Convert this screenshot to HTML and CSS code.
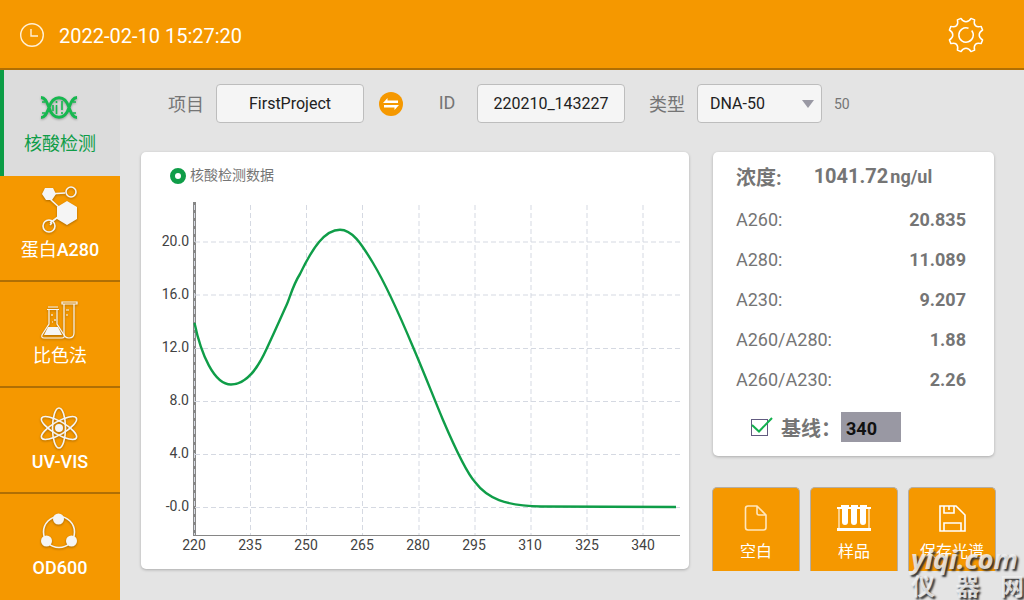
FILE: index.html
```html
<!DOCTYPE html>
<html lang="zh-CN">
<head>
    <meta charset="UTF-8">
    <meta name="viewport" content="width=device-width, initial-scale=1.0">
    <title>核酸检测</title>
    <link rel="stylesheet" href="styles.css">
</head>
<body>
    <header class="topbar">
        <svg class="clock-icon" width="24" height="24" viewBox="0 0 24 24">
            <circle cx="12" cy="12" r="11.3"/>
            <path d="M11 6v7h7"/>
        </svg>
        <time class="datetime">2022-02-10 15:27:20</time>
        <button class="settings-button" aria-label="设置">
            <svg width="36" height="36" viewBox="0 0 36 36">
                <path d="M13 1.4 Q15 4.8 18 4.8 Q21 4.8 23 1.4 L26.6 2.9 Q25.6 6.6 27.4 8.6 Q29.4 10.4 33.1 9.4 L34.6 13 Q31.2 15 31.2 18 Q31.2 21 34.6 23 L33.1 26.6 Q29.4 25.6 27.4 27.4 Q25.6 29.4 26.6 33.1 L23 34.6 Q21 31.2 18 31.2 Q15 31.2 13 34.6 L9.4 33.1 Q10.4 29.4 8.6 27.4 Q6.6 25.6 2.9 26.6 L1.4 23 Q4.8 21 4.8 18 Q4.8 15 1.4 13 L2.9 9.4 Q6.600 10.4 8.6 8.6 Q10.4 6.6 9.4 2.9 Z"/>
                <path d="M20.5 11.2a7.2 7.2 0 1 0 3.2 2.3"/>
            </svg>
        </button>
    </header>

    <div class="layout">
        <nav class="sidebar">
            <a href="#" class="nav-item active">
                <svg width="38" height="26" viewBox="0 0 38 26">
                    <path class="strand" d="M1 2.500C6 2.500 7 8 9 12.500C13 25.500 25 25.500 29 12.500C31 8 32 2.500 37 2.500M1 22.500C6 22.500 7 17 9 12.500C13-.5 25-.5 29 12.500C31 17 32 22.500 37 22.500"/>
                    <path d="M16.500 6v2M16.500 10v9M22 6v9M22 17v2M13 10v6M2 7h3M2 18h3M33 7h3M33 18h3"/>
                </svg>
                <span>核酸检测</span>
            </a>
            <a href="#" class="nav-item">
                <svg width="38" height="48" viewBox="0 0 38 48">
                    <path d="M8 8 25 7M10 13 22 24M10 37 22 28"/>
                    <path class="solid" d="M5 2h8l3 6-4 6H6L2 8ZM27 15l10 6v12l-10 6-10-6V21Z"/>
                    <circle cx="31" cy="6" r="5"/>
                    <circle cx="9" cy="40" r="6"/>
                    <path d="M10 39l2-2"/>
                </svg>
                <span>蛋白<b>A280</b></span>
            </a>
            <a href="#" class="nav-item">
                <svg class="thin" width="38" height="40" viewBox="0 0 38 40">
                    <path d="M8 7h10M7 9.500h12M9 10v14L2 35q-1 3 2 3h18q3 0 2-3L17 24V10"/>
                    <path class="solid" d="M8 27h10l4 8H4Z"/>
                    <path d="M12 14v2M15 19v2M12 22h1M22 2h15v2H22ZM24 4v29q0 5 5 5t5-5V4M26 10h3M26 15h2"/>
                </svg>
                <span>比色法</span>
            </a>
            <a href="#" class="nav-item">
                <svg class="atom" width="40" height="42" viewBox="0 0 40 42">
                    <ellipse cx="20" cy="21" rx="6.500" ry="20"/>
                    <ellipse cx="20" cy="21" rx="6.500" ry="20" transform="rotate(60 20 21)"/>
                    <ellipse cx="20" cy="21" rx="6.500" ry="20" transform="rotate(-60 20 21)"/>
                    <circle class="solid" cx="20" cy="21" r="4"/>
                </svg>
                <b>UV-VIS</b>
            </a>
            <a href="#" class="nav-item">
                <svg width="38" height="40" viewBox="0 0 38 40">
                    <circle cx="19" cy="20" r="15.500"/>
                    <circle class="solid" cx="18.500" cy="7" r="5.500"/>
                    <circle class="solid" cx="6.500" cy="29" r="5.500"/>
                    <circle class="solid" cx="31.500" cy="29" r="5.500"/>
                </svg>
                <b>OD600</b>
            </a>
        </nav>

        <main class="content">
            <form class="toolbar">
                <div class="field">
                    <label for="project">项目</label>
                    <input type="text" id="project" value="FirstProject">
                    <button type="button" class="swap-button" aria-label="切换项目">
                        <svg width="24" height="24" viewBox="0 0 24 24">
                            <path d="M4 11 8.500 6v2.500H19V11ZM20 13l-4.500 5v-2.500H5V13Z"/>
                        </svg>
                    </button>
                </div>
                <div class="field">
                    <label for="sample-id">ID</label>
                    <input type="text" id="sample-id" value="220210_143227">
                </div>
                <div class="field">
                    <label for="type">类型</label>
                    <div class="select-wrap">
                        <select id="type">
                            <option>DNA-50</option>
                            <option>RNA-40</option>
                        </select>
                    </div>
                    <span class="factor">50</span>
                </div>
            </form>

            <div class="panels">
                <section class="card chart-card">
                    <div class="legend"><span class="legend-dot"></span>核酸检测数据</div>
                    <svg class="chart" viewBox="0 0 548 377">
                        <path class="axis-y" d="M53.500 10V344"/>
                        <path class="grid" d="M53.500 13V343M109.500 13V343M165.500 13V343M221.500 13V343M278 13V343M334 13V343M390 13V343M446 13V343M502 13V343"/>
                        <path class="grid" d="M54 50H539M54 103H539M54 156.500H539M54 209.500H539M54 262.500H539M54 315.500H539"/>
                        <path class="axis-x" d="M52 343.500H539"/>
                        <path class="curve" d="M53.500 131C60 162 73 192.500 90 192.500C106 192.500 117 176 126 156C134 139 141 123 146 112C149 105 152 93 159 82C172 55 184 37.700 199 37.700C211 37.700 220 51 232 71C247 96 259 124 272 155C284 183 292 204 302 228C311 249 324 279 334 290C346 306 364 314 400 314.500L535 315"/>
                        <g class="labels-y">
                            <text x="48" y="54">20.0</text>
                            <text x="48" y="107">16.0</text>
                            <text x="48" y="160">12.0</text>
                            <text x="48" y="213">8.0</text>
                            <text x="48" y="266">4.0</text>
                            <text x="48" y="319">-0.0</text>
                        </g>
                        <g class="labels-x">
                            <text x="53" y="358">220</text>
                            <text x="109" y="358">235</text>
                            <text x="165" y="358">250</text>
                            <text x="221" y="358">265</text>
                            <text x="277" y="358">280</text>
                            <text x="333" y="358">295</text>
                            <text x="389" y="358">310</text>
                            <text x="446" y="358">325</text>
                            <text x="502" y="358">340</text>
                        </g>
                    </svg>
                </section>

                <div class="side">
                    <section class="card readings">
                        <div class="concentration">
                            <span class="name">浓度:</span>
                            <span class="value">1041.72</span>
                            <span class="unit">ng/ul</span>
                        </div>
                        <table>
                            <tr><th scope="row">A260:</th><td>20.835</td></tr>
                            <tr><th scope="row">A280:</th><td>11.089</td></tr>
                            <tr><th scope="row">A230:</th><td>9.207</td></tr>
                            <tr><th scope="row">A260/A280:</th><td>1.88</td></tr>
                            <tr><th scope="row">A260/A230:</th><td>2.26</td></tr>
                        </table>
                        <div class="baseline">
                            <label class="check">
                                <input type="checkbox" checked aria-label="启用基线">
                                <svg width="24" height="20" viewBox="0 0 24 20">
                                    <path d="M1 10 8 16.500 21 3"/>
                                </svg>
                            </label>
                            <label for="baseline-value">基线：</label>
                            <input type="text" id="baseline-value" value="340">
                        </div>
                    </section>

                    <div class="actions">
                        <button>
                            <svg class="faded" width="34" height="28" viewBox="0 0 34 28">
                                <path d="M18 2H9Q6.500 2 6.500 4.500V23.500Q6.500 26 9 26H24.500Q27 26 27 23.500V11ZM18 2V9Q18 11 20 11H27"/>
                            </svg>
                            <span>空白</span>
                        </button>
                        <button>
                            <svg width="34" height="28" viewBox="0 0 34 28">
                                <path class="solid" d="M4 1h8v2h2V1h7v2h2V1h7v2h4v2H0V3h4ZM5 5h6v13q0 3-3 3t-3-3ZM14 5h6v13q0 3-3 3t-3-3ZM23 5h6v13q0 3-3 3t-3-3ZM0 24h34v3H0Z"/>
                                <path class="stand" d="M2 5v19M32 5v19"/>
                            </svg>
                            <span>样品</span>
                        </button>
                        <button>
                            <svg width="34" height="28" viewBox="0 0 34 28">
                                <path d="M5 2H21L30 11V27H5ZM9 2V9H19V2M14 2V6M9 27V19H26V27"/>
                            </svg>
                            <span>保存光谱</span>
                        </button>
                    </div>
                </div>
            </div>
        </main>
    </div>

    <div class="watermark">
        <div class="site">yiqi.com</div>
        <div class="site-cn"><span>仪</span><span>器</span><span>网</span></div>
    </div>
</body>
</html>
```
FILE: styles.css
```css
* {
    box-sizing: border-box;
}
body {
    margin: 0;
    min-height: 100vh;
    display: flex;
    flex-direction: column;
    position: relative;
    overflow-x: hidden;
    background-color: #e4e4e4;
    color: #757575;
    font-family: Roboto, "Noto Sans CJK SC", sans-serif;
    font-size: 18px;
}
button, input, select {
    font-family: inherit;
}
button {
    padding: 0;
    border: none;
    cursor: pointer;
}
svg {
    display: block;
    fill: none;
}

/* top bar */
.topbar {
    display: flex;
    align-items: center;
    height: 70px;
    padding: 2px 40px 0 20px;
    background-color: #f59800;
    border-bottom: 2px solid #b06f04;
    color: #fff;
}
.clock-icon {
    stroke: #fff0d6;
    stroke-width: 1.4;
}
.datetime {
    margin-left: 15px;
    font-size: 20px;
    line-height: 24px;
    padding-top: 2px;
}
.settings-button {
    margin-left: auto;
    background: none;
}
.settings-button svg {
    stroke: #fff;
    stroke-width: 1.5;
    stroke-linejoin: round;
}

/* sidebar */
.layout {
    flex: 1;
    display: flex;
}
.sidebar {
    width: 120px;
    flex-shrink: 0;
    background-color: #f59800;
}
.nav-item {
    display: flex;
    flex-direction: column;
    align-items: center;
    justify-content: flex-end;
    height: 106px;
    padding-bottom: 17px;
    border-bottom: 2px solid #b06f04;
    color: #fff;
    line-height: 26px;
    text-decoration: none;
}
.nav-item:last-child {
    border-bottom-color: transparent;
}
.nav-item b {
    font-weight: 500;
}
.nav-item svg {
    margin: 0 2px 3px 0;
    stroke: #f5f5f5;
    stroke-width: 1.6;
    filter: drop-shadow(0 1px 1px rgba(0, 0, 0, 0.3));
}
.nav-item .solid {
    fill: #f5f5f5;
    stroke: none;
}
.nav-item .thin {
    stroke-width: 1.2;
}
.nav-item .atom {
    margin-bottom: 0;
}
.nav-item.active {
    background-color: #dcdcdc;
    border-bottom: none;
    border-left: 4px solid #0b9c45;
    padding-right: 4px;
    padding-bottom: 19px;
    color: #0f9d48;
}
.nav-item.active svg {
    margin-bottom: 10px;
    stroke: #16b84f;
}
.nav-item .strand {
    stroke-width: 2.8;
}

/* toolbar */
.content {
    flex: 1;
    min-width: 0;
    padding: 14px 30px 28px 21px;
}
.toolbar {
    display: flex;
    gap: 24px;
    padding-left: 27px;
    margin-bottom: 29px;
}
.field {
    display: flex;
    align-items: center;
    gap: 12px;
}
.field label {
    width: 36px;
    padding-bottom: 2px;
    text-align: center;
}
.field input,
.field select {
    height: 39px;
    border: 1px solid #bdbdbd;
    border-radius: 4px;
    background-color: #f5f5f5;
    color: #212121;
    font-size: 16px;
}
.field input {
    width: 148px;
    text-align: center;
}
.swap-button {
    margin: 0 2px 0 3px;
    border-radius: 50%;
    background-color: #f59800;
}
.swap-button path {
    fill: #fff;
}
.select-wrap {
    position: relative;
}
.select-wrap::after {
    content: "";
    position: absolute;
    right: 8px;
    top: 16px;
    border: 6px solid transparent;
    border-top: 8px solid #9998a3;
    border-bottom: none;
    pointer-events: none;
}
.field select {
    width: 125px;
    padding-left: 12px;
    appearance: none;
}
.factor {
    font-size: 14px;
}

/* panels */
.panels {
    display: grid;
    grid-template-columns: 1fr 281px;
    align-items: start;
    gap: 24px;
}
.card {
    border-radius: 5px;
    background-color: #fff;
    box-shadow: 0 1px 3px rgba(0, 0, 0, 0.25);
}
.legend {
    display: flex;
    align-items: center;
    gap: 4px;
    height: 40px;
    padding: 4px 0 0 29px;
    font-size: 14px;
}
.legend-dot {
    width: 16px;
    height: 16px;
    margin-top: 4px;
    border: 5px solid #0f9d48;
    border-radius: 50%;
}
.chart {
    width: 100%;
}
.chart .grid {
    stroke: #d5d9e2;
    stroke-dasharray: 5 3;
}
.chart .axis-y {
    stroke: #868686;
    stroke-width: 3;
}
.chart .axis-x {
    stroke: #868686;
}
.chart .curve {
    stroke: #0f9d48;
    stroke-width: 2.4;
}
.chart text {
    fill: #424242;
    font-size: 14px;
}
.labels-y {
    text-anchor: end;
}
.labels-x {
    text-anchor: middle;
}

/* readings */
.readings {
    padding: 9px 28px 14px 23px;
}
.concentration {
    display: flex;
    align-items: center;
    height: 30px;
    margin-bottom: 8px;
    font-size: 20px;
    font-weight: bold;
}
.concentration .value {
    margin-left: 32px;
}
.concentration .unit {
    margin-left: 2px;
    font-size: 18px;
}
.readings table {
    width: 100%;
    border-collapse: collapse;
}
.readings th,
.readings td {
    height: 40px;
    padding: 0;
}
.readings th {
    font-weight: normal;
    text-align: left;
}
.readings td {
    font-weight: bold;
    text-align: right;
}
.baseline {
    display: flex;
    align-items: center;
    height: 30px;
    margin-top: 13px;
    padding-left: 15px;
    font-size: 20px;
    font-weight: bold;
}
.check {
    position: relative;
    width: 30px;
    height: 16px;
}
.check input {
    display: block;
    width: 17px;
    height: 17px;
    margin: 0;
    border: 1px solid #625b80;
    appearance: none;
}
.check svg {
    position: absolute;
    left: 0;
    bottom: 0;
    stroke: #12b04e;
    stroke-width: 2;
}
.check input:not(:checked) + svg {
    display: none;
}
#baseline-value {
    width: 60px;
    height: 30px;
    padding: 2px 5px 0;
    border: none;
    background-color: #9998a3;
    color: #111;
    font-size: 18px;
    font-weight: bold;
}

/* action buttons */
.actions {
    display: grid;
    grid-template-columns: repeat(3, 1fr);
    gap: 10px;
    margin: 31px -2px 0 -1px;
}
.actions button {
    display: flex;
    flex-direction: column;
    align-items: center;
    height: 84px;
    padding-top: 16px;
    border: 1px solid #b4aea6;
    border-bottom: none;
    border-radius: 5px 5px 0 0;
    background-color: #f59800;
    color: #fff;
    font-size: 16px;
}
.actions svg {
    margin-bottom: 6px;
    stroke: #fff;
    stroke-width: 1.6;
}
.actions .faded {
    stroke: #ffe6bd;
}
.actions .solid {
    fill: #fff;
    stroke: none;
}
.actions .stand {
    stroke: #ffdca6;
}

/* watermark over the bottom corner */
.watermark {
    position: absolute;
    right: 0;
    bottom: 0;
    width: 113px;
    color: rgba(240, 240, 240, 0.85);
    text-shadow: 2px 2px 2px #333;
    pointer-events: none;
}
.site {
    font-family: "Open Sans", sans-serif;
    font-size: 27px;
    font-style: italic;
    font-weight: 700;
    line-height: 30px;
    white-space: nowrap;
}
.site-cn {
    display: flex;
    justify-content: space-between;
    font-size: 24px;
    font-weight: bold;
    line-height: 26px;
}
```
